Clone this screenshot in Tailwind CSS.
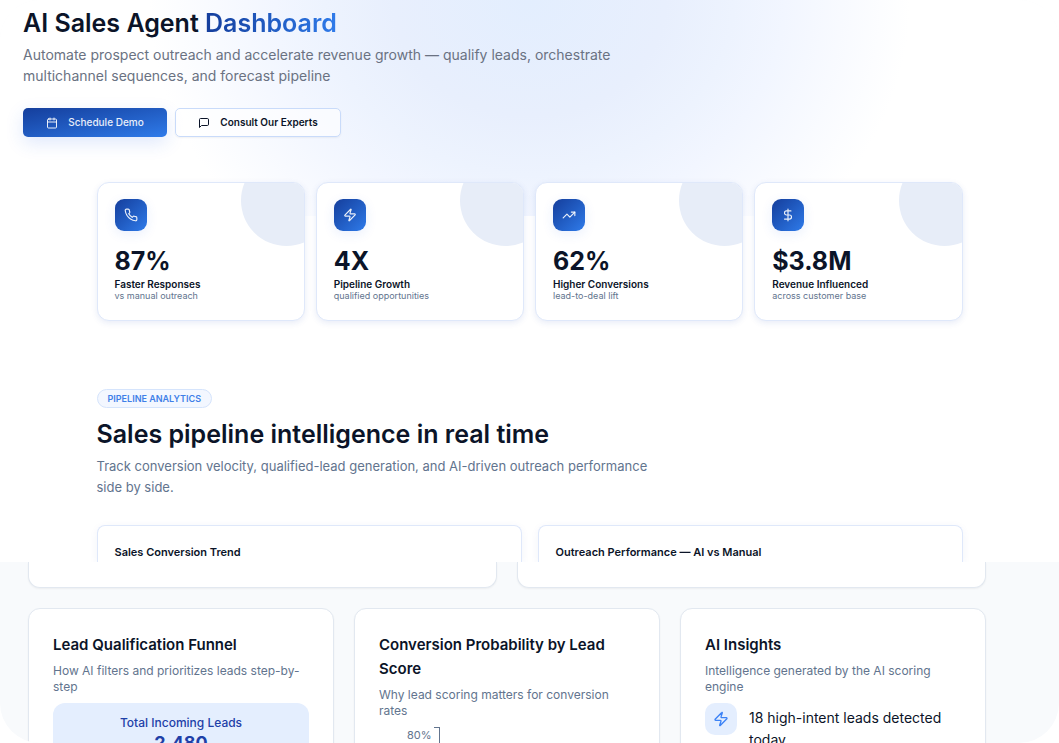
<!DOCTYPE html>
<html lang="en">
<head>
<meta charset="utf-8">
<meta name="viewport" content="width=device-width, initial-scale=1">
<title>AI Sales Agent Dashboard</title>
<script src="https://cdn.jsdelivr.net/npm/@tailwindcss/browser@4"></script>
</head>
<body class="bg-white font-['Inter','Liberation_Sans',sans-serif] text-[#0b1428]">
<svg class="hidden" aria-hidden="true">
  <symbol id="zap" viewBox="0 0 24 24"><path d="M4 14a1 1 0 0 1-.78-1.63l9.9-10.2a.5.5 0 0 1 .86.46l-1.92 6.02A1 1 0 0 0 13 10h7a1 1 0 0 1 .78 1.63l-9.9 10.2a.5.5 0 0 1-.86-.46l1.92-6.02A1 1 0 0 0 11 14z"/></symbol>
</svg>
<div class="flex h-screen flex-col overflow-hidden rounded-[40px] bg-slate-50">
  <main class="shrink-0 overflow-hidden bg-white">
    <div class="bg-[radial-gradient(ellipse_340px_290px_at_50%_0%,#e3eefe_0%,#e8effd_40%,#edf3fe_60%,#f2f6ff_75%,#ffffff_112%)] bg-[length:100%_216px] bg-no-repeat">
      <header class="px-[23px] pt-[7px]">
        <h1 class="text-[25px] leading-8 font-semibold">AI Sales Agent <span class="bg-linear-to-r from-[#153e9c] to-[#2f7bea] bg-clip-text text-transparent">Dashboard</span></h1>
        <p class="mt-[5px] max-w-[620px] text-[14px] leading-[21px] text-gray-500">Automate prospect outreach and accelerate revenue growth — qualify leads, orchestrate multichannel sequences, and forecast pipeline</p>
        <div class="mt-[22px] flex gap-2">
          <button type="button" class="flex h-[29px] w-36 items-center justify-center gap-2.5 rounded-[5px] bg-linear-to-br from-[#153e9c] to-[#2f7bea] text-[10px] font-medium text-white/90 shadow-[0_6px_18px_#2563eb26]">
            <svg class="size-3" viewBox="0 0 24 24" fill="none" stroke="currentColor" stroke-width="2" stroke-linecap="round" stroke-linejoin="round" aria-hidden="true"><path d="M8 2v4M16 2v4M3 10h18"/><rect x="3" y="4" width="18" height="18" rx="2"/></svg>
            Schedule Demo</button>
          <button type="button" class="flex h-[29px] w-[166px] items-center justify-center gap-2.5 rounded-[5px] border border-[#c9dbfa] bg-white/60 text-[10px] font-semibold shadow-xs">
            <svg class="size-3" viewBox="0 0 24 24" fill="none" stroke="currentColor" stroke-width="2" stroke-linecap="round" stroke-linejoin="round" aria-hidden="true"><path d="M21 15a2 2 0 0 1-2 2H7l-4 4V5a2 2 0 0 1 2-2h14a2 2 0 0 1 2 2z"/></svg>
            Consult Our Experts</button>
        </div>
      </header>

      <section aria-label="Key results" class="mx-auto mt-[45px] grid max-w-[962px] grid-cols-4 gap-[11px] px-12">
        <article class="relative h-[139px] overflow-hidden rounded-xl border border-[#dfe8fa] bg-white px-[17px] pt-4 shadow-[0_2px_6px_#1e40af1a]">
          <div class="absolute -top-7 -right-7 size-[91px] rounded-full bg-[#e7edf8]"></div>
          <div class="flex size-8 items-center justify-center rounded-[9px] bg-linear-to-br from-[#153e9c] to-[#2f7bea] text-white/90 shadow-[0_3px_12px_#2563eb1a]">
            <svg class="size-3.5" viewBox="0 0 24 24" fill="none" stroke="currentColor" stroke-width="2" stroke-linecap="round" stroke-linejoin="round" aria-hidden="true"><path d="M22 16.92v3a2 2 0 0 1-2.18 2 19.79 19.79 0 0 1-8.63-3.07 19.5 19.5 0 0 1-6-6 19.79 19.79 0 0 1-3.07-8.67A2 2 0 0 1 4.11 2h3a2 2 0 0 1 2 1.72c.127.96.361 1.903.7 2.81a2 2 0 0 1-.45 2.11L8.09 9.91a16 16 0 0 0 6 6l1.27-1.27a2 2 0 0 1 2.11-.45c.907.339 1.85.573 2.81.7A2 2 0 0 1 22 16.92z"/></svg>
          </div>
          <p class="mt-3.5 text-[25px] leading-8 font-bold">87%</p>
          <h2 class="mt-px text-[10px] leading-3 font-semibold">Faster Responses</h2>
          <p class="text-[9px] leading-3 text-slate-500">vs manual outreach</p>
        </article>
        <article class="relative h-[139px] overflow-hidden rounded-xl border border-[#dfe8fa] bg-white px-[17px] pt-4 shadow-[0_2px_6px_#1e40af1a]">
          <div class="absolute -top-7 -right-7 size-[91px] rounded-full bg-[#e7edf8]"></div>
          <div class="flex size-8 items-center justify-center rounded-[9px] bg-linear-to-br from-[#153e9c] to-[#2f7bea] text-white/90 shadow-[0_3px_12px_#2563eb1a]">
            <svg class="size-3.5" fill="none" stroke="currentColor" stroke-width="2" stroke-linecap="round" stroke-linejoin="round" aria-hidden="true"><use href="#zap"/></svg>
          </div>
          <p class="mt-3.5 text-[25px] leading-8 font-bold">4X</p>
          <h2 class="mt-px text-[10px] leading-3 font-semibold">Pipeline Growth</h2>
          <p class="text-[9px] leading-3 text-slate-500">qualified opportunities</p>
        </article>
        <article class="relative h-[139px] overflow-hidden rounded-xl border border-[#dfe8fa] bg-white px-[17px] pt-4 shadow-[0_2px_6px_#1e40af1a]">
          <div class="absolute -top-7 -right-7 size-[91px] rounded-full bg-[#e7edf8]"></div>
          <div class="flex size-8 items-center justify-center rounded-[9px] bg-linear-to-br from-[#153e9c] to-[#2f7bea] text-white/90 shadow-[0_3px_12px_#2563eb1a]">
            <svg class="size-3.5" viewBox="0 0 24 24" fill="none" stroke="currentColor" stroke-width="2" stroke-linecap="round" stroke-linejoin="round" aria-hidden="true"><path d="M22 7l-8.5 8.5-5-5L2 17"/><path d="M16 7h6v6"/></svg>
          </div>
          <p class="mt-3.5 text-[25px] leading-8 font-bold">62%</p>
          <h2 class="mt-px text-[10px] leading-3 font-semibold">Higher Conversions</h2>
          <p class="text-[9px] leading-3 text-slate-500">lead-to-deal lift</p>
        </article>
        <article class="relative h-[139px] overflow-hidden rounded-xl border border-[#dfe8fa] bg-white px-[17px] pt-4 shadow-[0_2px_6px_#1e40af1a]">
          <div class="absolute -top-7 -right-7 size-[91px] rounded-full bg-[#e7edf8]"></div>
          <div class="flex size-8 items-center justify-center rounded-[9px] bg-linear-to-br from-[#153e9c] to-[#2f7bea] text-white/90 shadow-[0_3px_12px_#2563eb1a]">
            <svg class="size-3.5" viewBox="0 0 24 24" fill="none" stroke="currentColor" stroke-width="2" stroke-linecap="round" stroke-linejoin="round" aria-hidden="true"><path d="M12 2v20M17 5H9.5a3.5 3.5 0 0 0 0 7h5a3.5 3.5 0 0 1 0 7H6"/></svg>
          </div>
          <p class="mt-3.5 text-[25px] leading-8 font-bold">$3.8M</p>
          <h2 class="mt-px text-[10px] leading-3 font-semibold">Revenue Influenced</h2>
          <p class="text-[9px] leading-3 text-slate-500">across customer base</p>
        </article>
      </section>
    </div>

    <section class="mx-auto mt-17 max-w-[962px] px-12">
      <p class="flex h-[19px] w-fit items-center rounded-full border border-[#d5e4fc] bg-[#f3f7ff] px-2.5 text-[9px] font-semibold text-[#3f7fe8]">PIPELINE ANALYTICS</p>
      <h2 class="mt-2.5 text-[25px] leading-8 font-semibold">Sales pipeline intelligence in real time</h2>
      <p class="mt-1.5 max-w-[560px] text-[13px] leading-[21px] text-slate-500">Track conversion velocity, qualified-lead generation, and AI-driven outreach performance side by side.</p>
      <div class="mt-[27px] grid grid-cols-2 gap-4">
        <article class="rounded-t-lg border border-b-0 border-[#dfe8fa] px-[17px] pt-4 shadow-[0_2px_8px_#1e40af0f]"><h3 class="text-[11px] leading-5 font-semibold">Sales Conversion Trend</h3></article>
        <article class="rounded-t-lg border border-b-0 border-[#dfe8fa] px-[17px] pt-4 shadow-[0_2px_8px_#1e40af0f]"><h3 class="text-[11px] leading-5 font-semibold">Outreach Performance — AI vs Manual</h3></article>
      </div>
    </section>
  </main>

  <section aria-label="Lead scoring" class="min-h-0 flex-1 overflow-hidden pr-[73px] pl-7">
    <div class="grid grid-cols-2 gap-5">
      <div class="h-[26px] rounded-b-xl border border-t-0 border-slate-200 bg-white shadow-xs"></div>
      <div class="h-[26px] rounded-b-xl border border-t-0 border-slate-200 bg-white shadow-xs"></div>
    </div>
    <div class="mt-5 grid h-[300px] grid-cols-3 gap-5">
      <article class="rounded-xl border border-slate-200 bg-white p-6 shadow-xs">
        <h2 class="text-[15px] leading-6 font-semibold">Lead Qualification Funnel</h2>
        <p class="mt-1.5 text-[12px] leading-4 text-slate-500">How AI filters and prioritizes leads step-by-step</p>
        <div class="mt-2 flex h-20 flex-col items-center rounded-xl bg-[#e4eefe] pt-2.5 text-[#1e40a8]">
          <p class="text-[12px] leading-5 font-medium">Total Incoming Leads</p>
          <p class="text-[18px] leading-5 font-bold">2,480</p>
        </div>
      </article>
      <article class="rounded-xl border border-slate-200 bg-white p-6 shadow-xs">
        <h2 class="text-[15px] leading-6 font-semibold">Conversion Probability by Lead Score</h2>
        <p class="mt-1.5 text-[12px] leading-4 text-slate-500">Why lead scoring matters for conversion rates</p>
        <div class="mt-2 ml-7 flex items-start text-slate-500">
          <span class="text-[11px] leading-4">80%</span>
          <span class="ml-0.5 h-40 w-1.5 border-t border-r border-slate-500"></span>
        </div>
      </article>
      <article class="rounded-xl border border-slate-200 bg-white p-6 shadow-xs">
        <h2 class="text-[15px] leading-6 font-semibold">AI Insights</h2>
        <p class="mt-1.5 text-[12px] leading-4 text-slate-500">Intelligence generated by the AI scoring engine</p>
        <div class="mt-2 flex gap-3">
          <span class="flex size-8 shrink-0 items-center justify-center rounded-[10px] bg-[#e4eefe] text-[#3b82f6]"><svg class="size-4" fill="none" stroke="currentColor" stroke-width="2" stroke-linecap="round" stroke-linejoin="round" aria-hidden="true"><use href="#zap"/></svg></span>
          <p class="pt-1 text-[14px] leading-[22px]">18 high-intent leads detected today</p>
        </div>
      </article>
    </div>
  </section>
</div>
</body>
</html>
